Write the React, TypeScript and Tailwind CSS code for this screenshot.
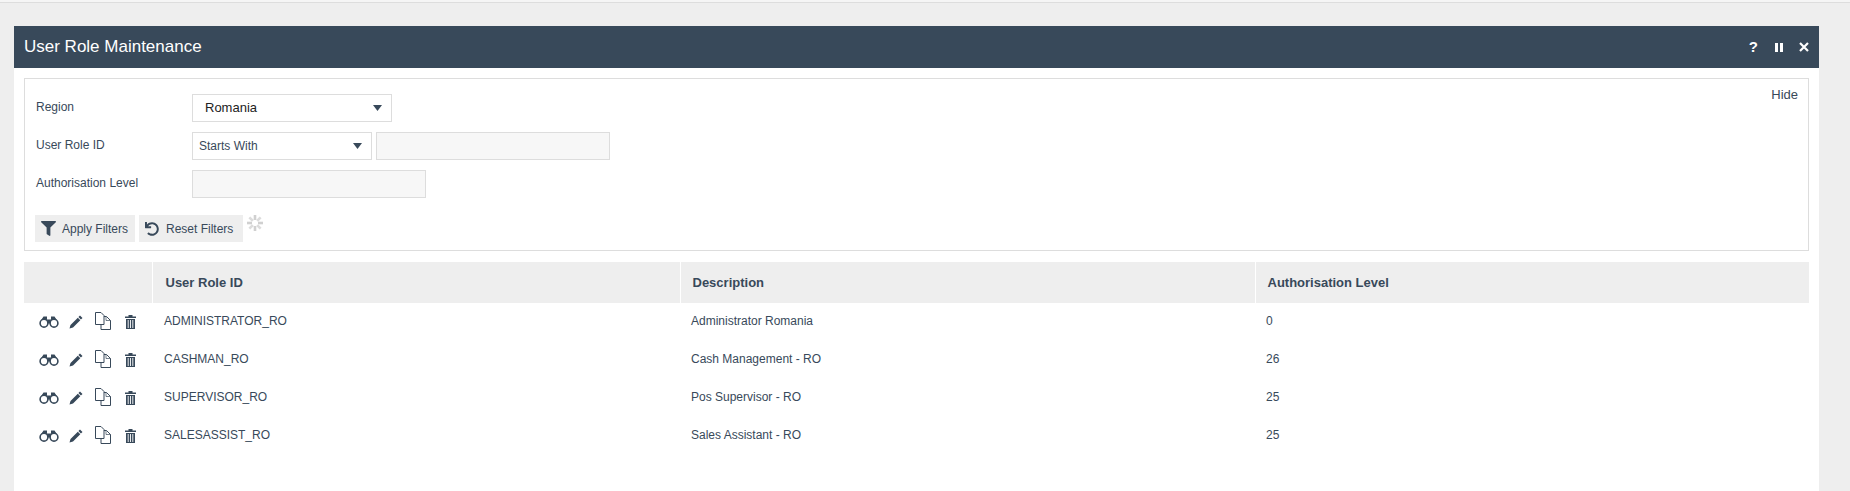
import React from "react";
import { FaUndo, FaFilter } from "react-icons/fa";

const rows = [
  { id: "ADMINISTRATOR_RO", description: "Administrator Romania", level: "0" },
  { id: "CASHMAN_RO", description: "Cash Management - RO", level: "26" },
  { id: "SUPERVISOR_RO", description: "Pos Supervisor - RO", level: "25" },
  { id: "SALESASSIST_RO", description: "Sales Assistant - RO", level: "25" },
];

const Caret = () => (
  <svg width="9" height="6" viewBox="0 0 9 6" className="shrink-0">
    <path d="M0 0h9L4.5 6z" fill="#38495a" />
  </svg>
);

const Binoculars = () => (
  <svg width="20" height="12" viewBox="0 0 20 12" className="shrink-0">
    <path d="M4.5 0.5h3.5v3h4v-3h3.5L19 6H1z" fill="#38495a" />
    <rect x="8" y="4" width="4" height="3.5" fill="#38495a" />
    <circle cx="5" cy="7.2" r="3.9" fill="#fff" stroke="#38495a" strokeWidth="1.6" />
    <circle cx="15" cy="7.2" r="3.9" fill="#fff" stroke="#38495a" strokeWidth="1.6" />
  </svg>
);

const Pencil = () => (
  <svg width="14" height="14" viewBox="0 0 14 14" className="shrink-0">
    <path d="M11 0.5l2.5 2.5-1.6 1.6-2.5-2.5z M8.8 2.7l2.5 2.5-7.3 7.3L.5 13.5l1-3.5z" fill="#38495a" />
  </svg>
);

const Copy = () => (
  <svg width="16" height="18" viewBox="0 0 16 18" fill="none" stroke="#38495a" className="shrink-0">
    <path d="M.5.5h5.5l3 3v9H.5z" />
    <path d="M9 4.5h2.5l4 4v9H6v-4.5" />
    <path d="M11 4.5v4h4.5" strokeWidth="0.7" />
  </svg>
);

const Trash = () => (
  <svg width="11" height="14" viewBox="0 0 11 14" className="shrink-0">
    <path d="M3.5 0h4v1.5H11V3H0V1.5h3.5z M1 4h9v10H1z" fill="#38495a" />
    <path d="M3.2 5v8M5.5 5v8M7.8 5v8" stroke="#fff" strokeWidth="0.9" />
  </svg>
);

const Close = () => (
  <svg width="10" height="10" viewBox="0 0 10 10" className="shrink-0">
    <path d="M1 1l8 8M9 1l-8 8" stroke="#fff" strokeWidth="2.2" />
  </svg>
);

const Spinner = () => (
  <svg width="16" height="16" viewBox="0 0 16 16" className="shrink-0">
    {[0, 45, 90, 135, 180, 225, 270, 315].map((a, i) => (
      <rect key={a} x="6.7" y="0" width="2.6" height="5" fill="#d0d0d0" opacity={i % 2 ? 0.75 : 1} transform={`rotate(${a} 8 8)`} />
    ))}
  </svg>
);

export default function App() {
  return (
    <div className="h-[491px] overflow-hidden bg-[#eeeeee] font-['Liberation_Sans',Arial,sans-serif] text-[12px] text-[#38495a]">
      <div className="h-[3px] border-b border-[#dddddd] bg-[#f5f5f5]" />
      <div className="ml-[14px] mt-[23px] w-[1805px]">
        <div className="flex h-[42px] items-center justify-between bg-[#38495a] pl-[10px] pr-[10px] text-white">
          <span className="text-[17px]">User Role Maintenance</span>
          <div className="flex items-center">
            <span className="text-[15px] font-bold">?</span>
            <span className="ml-[17px] flex h-[9px] gap-[2px]">
              <span className="w-[3px] bg-white" />
              <span className="w-[3px] bg-white" />
            </span>
            <span className="ml-[16px]">
              <Close />
            </span>
          </div>
        </div>

        <div className="h-[423px] bg-white px-[10px] pt-[10px]">
          <div className="relative h-[173px] border border-[#dddddd] pl-[11px] pt-[15px]">
            <a className="absolute right-[10px] top-[6px] text-[13px]">Hide</a>
            <div className="flex h-[38px] items-start">
              <label className="w-[156px] pt-[4px]">Region</label>
              <div className="flex h-[28px] w-[200px] items-center justify-between border border-[#dddddd] pl-[12px] pr-[9px] text-[13px] text-[#222222]">
                Romania
                <Caret />
              </div>
            </div>
            <div className="flex h-[38px] items-start">
              <label className="w-[156px] pt-[4px]">User Role ID</label>
              <div className="flex h-[28px] w-[180px] items-center justify-between border border-[#dddddd] pl-[6px] pr-[9px]">
                Starts With
                <Caret />
              </div>
              <div className="ml-[4px] h-[28px] w-[234px] border border-[#dddddd] bg-[#f7f7f7]" />
            </div>
            <div className="flex h-[38px] items-start">
              <label className="w-[156px] pt-[4px]">Authorisation Level</label>
              <div className="h-[28px] w-[234px] border border-[#dddddd] bg-[#f7f7f7]" />
            </div>
            <div className="ml-[-1px] mt-[7px] flex items-start gap-[4px] whitespace-nowrap">
              <button className="flex h-[27px] w-[100px] items-center gap-[6px] bg-[#eeeeee] pl-[6px]">
                <FaFilter size={15} />
                Apply Filters
              </button>
              <button className="flex h-[27px] w-[104px] items-center gap-[7px] bg-[#eeeeee] pl-[6px]">
                <FaUndo size={14} />
                Reset Filters
              </button>
              <Spinner />
            </div>
          </div>

          <table className="mt-[11px] w-[1785px] table-fixed border-collapse">
            <thead>
              <tr className="h-[41px] bg-[#eeeeee] text-left text-[13px]">
                <th className="w-[128px] font-bold" />
                <th className="w-[528px] border-l border-white pl-[13px] font-bold">User Role ID</th>
                <th className="w-[575px] border-l border-white pl-[12px] font-bold">Description</th>
                <th className="border-l border-white pl-[12px] font-bold">Authorisation Level</th>
              </tr>
            </thead>
            <tbody>
              {rows.map((row) => (
                <tr key={row.id} className="h-[38px]">
                  <td>
                    <div className="flex items-center pl-[15px]">
                      <Binoculars />
                      <span className="ml-[10px]">
                        <Pencil />
                      </span>
                      <span className="ml-[12px] mt-[-3px]">
                        <Copy />
                      </span>
                      <span className="ml-[14px]">
                        <Trash />
                      </span>
                    </div>
                  </td>
                  <td className="pb-[2px] pl-[12px]">{row.id}</td>
                  <td className="pb-[2px] pl-[11px]">{row.description}</td>
                  <td className="pb-[2px] pl-[11px]">{row.level}</td>
                </tr>
              ))}
            </tbody>
          </table>
        </div>
      </div>
    </div>
  );
}
